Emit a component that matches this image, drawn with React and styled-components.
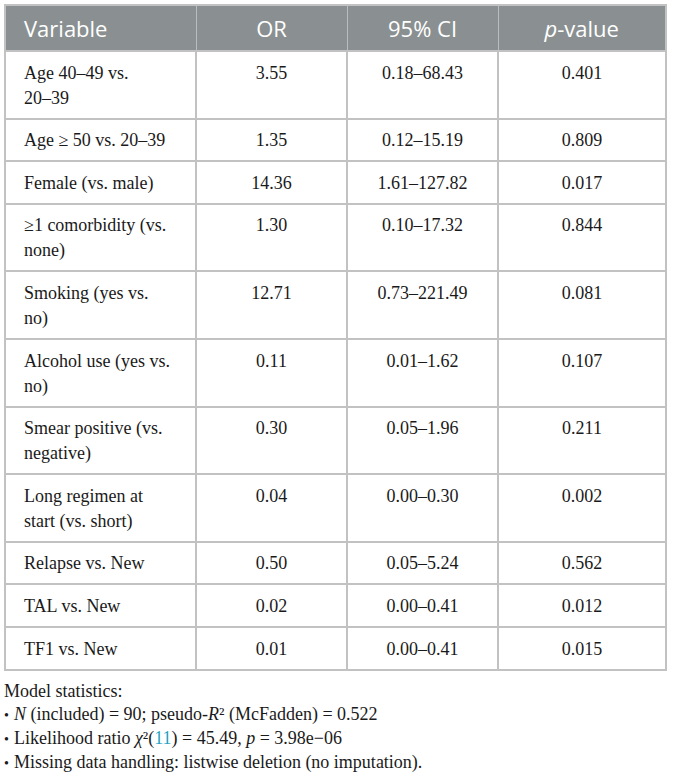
import React from "react";
import styled, {createGlobalStyle} from "styled-components";

const GlobalStyle = createGlobalStyle`
  body {
    margin: 0;
    background: #ffffff;
  }
`;

// labels keep the line breaks of the printed table
const rows = [
    {label: "Age 40–49 vs.\n20–39", or: "3.55", ci: "0.18–68.43", p: "0.401"},
    {label: "Age ≥ 50 vs. 20–39", or: "1.35", ci: "0.12–15.19", p: "0.809"},
    {label: "Female (vs. male)", or: "14.36", ci: "1.61–127.82", p: "0.017"},
    {label: "≥1 comorbidity (vs.\nnone)", or: "1.30", ci: "0.10–17.32", p: "0.844"},
    {label: "Smoking (yes vs.\nno)", or: "12.71", ci: "0.73–221.49", p: "0.081"},
    {label: "Alcohol use (yes vs.\nno)", or: "0.11", ci: "0.01–1.62", p: "0.107"},
    {label: "Smear positive (vs.\nnegative)", or: "0.30", ci: "0.05–1.96", p: "0.211"},
    {label: "Long regimen at\nstart (vs. short)", or: "0.04", ci: "0.00–0.30", p: "0.002"},
    {label: "Relapse vs. New", or: "0.50", ci: "0.05–5.24", p: "0.562"},
    {label: "TAL vs. New", or: "0.02", ci: "0.00–0.41", p: "0.012"},
    {label: "TF1 vs. New", or: "0.01", ci: "0.00–0.41", p: "0.015"},
];

const App = () => {
    return (
        <Wrapper>
            <GlobalStyle/>
            <Table>
                <colgroup>
                    <col style={{width: 191}}/>
                    <col style={{width: 151}}/>
                    <col style={{width: 151}}/>
                    <col/>
                </colgroup>
                <thead>
                <tr>
                    <HeadCell $align="left">Variable</HeadCell>
                    <HeadCell>OR</HeadCell>
                    <HeadCell>95% CI</HeadCell>
                    <HeadCell><i>p</i>-value</HeadCell>
                </tr>
                </thead>
                <tbody>
                {rows.map((row) => (
                    <tr key={row.label}>
                        <Cell $align="left">{row.label}</Cell>
                        <Cell>{row.or}</Cell>
                        <Cell>{row.ci}</Cell>
                        <Cell>{row.p}</Cell>
                    </tr>
                ))}
                </tbody>
            </Table>
            <Notes>
                <NoteLine>Model statistics:</NoteLine>
                <NoteLine><Bullet>•</Bullet><i>N</i> (included) = 90; pseudo-<i>R</i>² (McFadden) = 0.522</NoteLine>
                <NoteLine><Bullet>•</Bullet>Likelihood ratio <i>χ</i>²(<Ref>11</Ref>) = 45.49, <i>p</i> = 3.98e−06</NoteLine>
                <NoteLine><Bullet>•</Bullet>Missing data handling: listwise deletion (no imputation).</NoteLine>
            </Notes>
        </Wrapper>
    );
};

const Wrapper = styled.div`
  padding: 4px 6px 0 4px;
  font-family: "Liberation Serif", "Times New Roman", serif;
  color: #1a1a1a;
`;

const Table = styled.table`
  width: 663px;
  border-collapse: collapse;
  table-layout: fixed;
  border: 2px solid #c2c2c2;
`;

const HeadCell = styled.th`
  background: #8a9091;
  color: #ffffff;
  font-family: "Open Sans", "Noto Sans", sans-serif;
  font-weight: 400;
  font-size: 22px;
  height: 46px;
  padding: 0 18px;
  text-align: ${(p) => p.$align || "center"};
  border-left: 1px solid #b9bdbe;
  border-top: 2px solid #c2c2c2;
  box-sizing: border-box;

  &:first-child {
    border-left: none;
  }
`;

const Cell = styled.td`
  font-size: 18px;
  line-height: 25px;
  padding: 8.6px 18px 7px;
  text-align: ${(p) => p.$align || "center"};
  vertical-align: top;
  white-space: pre-line;
  border: 2px solid #c2c2c2;
`;

const Notes = styled.div`
  margin-top: 9px;
  font-size: 18px;
`;

const NoteLine = styled.div`
  height: 23.7px;
  line-height: 23.7px;
  white-space: nowrap;
`;

const Bullet = styled.span`
  font-size: 14px;
  margin-right: 5px;
`;

const Ref = styled.span`
  color: #1fa3c4;
`;

export default App;
